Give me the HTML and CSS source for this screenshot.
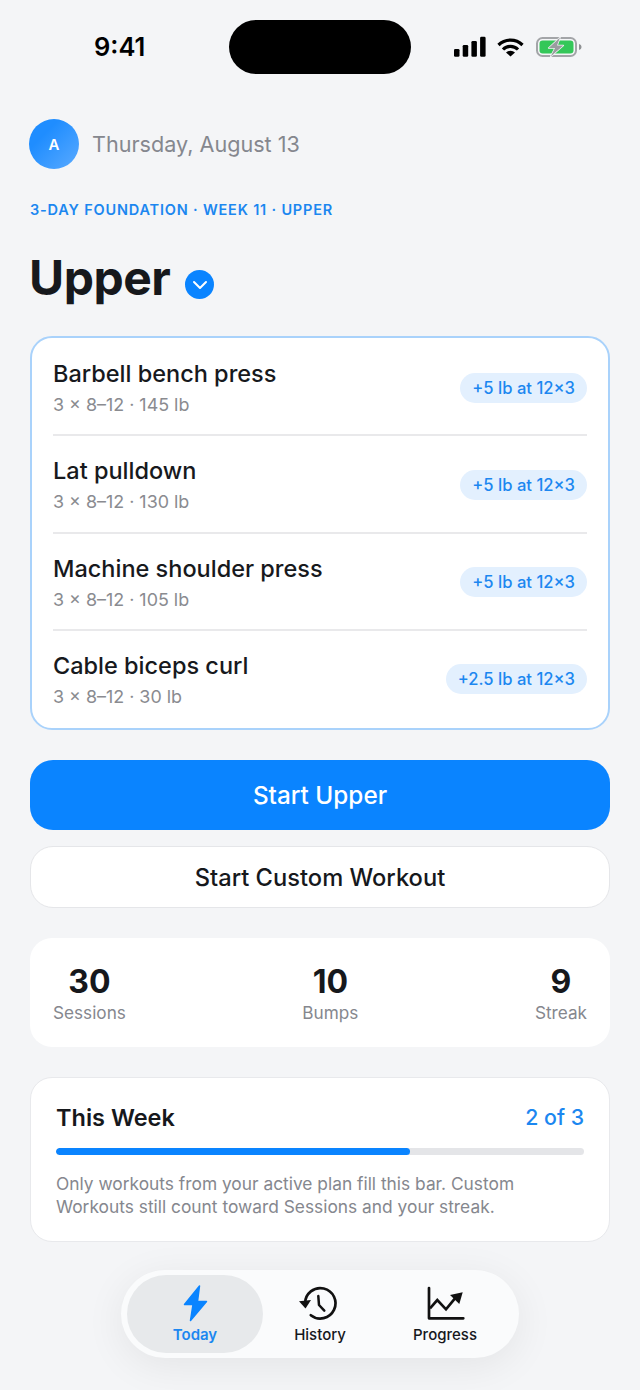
FILE: index.html
```html
<!DOCTYPE html>
<html lang="en">
<head>
<meta charset="utf-8">
<title>Today</title>
<link rel="stylesheet" href="styles.css">
</head>
<body>
<div class="screen">
  <header class="status">
    <span class="time">9:41</span>
    <div class="island"></div>
    <div class="status-icons">
      <svg width="32" height="22" viewBox="0 0 32 22"><rect x="0" y="14" width="5.500" height="7.700" rx="1.300" fill="#000"/><rect x="8.700" y="10" width="5.500" height="11.700" rx="1.300" fill="#000"/><rect x="17.400" y="6" width="5.500" height="15.700" rx="1.300" fill="#000"/><rect x="26.100" y="1.700" width="5.500" height="20" rx="1.300" fill="#000"/></svg>
      <svg width="28" height="22" viewBox="0 0 28 22"><path d="M1.500 10A17 17 0 0 1 25.500 10M6 14.500A10.500 10.500 0 0 1 21 14.500" fill="none" stroke="#000" stroke-width="3.200"/><path d="M9 17.500a6.400 6.400 0 0 1 9 0L13.500 21.500z" fill="#000"/></svg>
      <svg width="46" height="22" viewBox="0 0 46 22"><rect x="1" y="3" width="39" height="18" rx="5.500" fill="none" stroke="#a3a5a8" stroke-width="2"/><rect x="3.500" y="5.500" width="34" height="13" rx="3.200" fill="#34c759"/><path d="M43 9v6c1.500-.4 2.500-1.500 2.500-3s-1-2.600-2.500-3z" fill="#8f9194"/><path d="M24 2.500 12.700 13H19L14.700 21.500 27.300 10.500H21z" fill="#9a9c9f" stroke="#f4f5f7" stroke-width="1.500" stroke-linejoin="round" paint-order="stroke"/></svg>
    </div>
  </header>

  <main class="content">
    <div class="date-row">
      <div class="avatar">A</div>
      <span class="date">Thursday, August 13</span>
    </div>
    <p class="eyebrow">3-DAY FOUNDATION · WEEK 11 · UPPER</p>
    <div class="title-row">
      <h1 class="title">Upper</h1>
      <span class="chevron"><svg width="16" height="10" viewBox="0 0 16 10"><path d="M2 2l6 6 6-6" fill="none" stroke="#fff" stroke-width="2" stroke-linecap="round" stroke-linejoin="round"/></svg></span>
    </div>

    <section class="card exercises">
      <div class="exercise">
        <div class="ex-text"><div class="ex-name">Barbell bench press</div><div class="ex-meta">3 × 8–12 · 145 lb</div></div>
        <span class="bump">+5 lb at 12×3</span>
      </div>
      <div class="exercise">
        <div class="ex-text"><div class="ex-name">Lat pulldown</div><div class="ex-meta">3 × 8–12 · 130 lb</div></div>
        <span class="bump">+5 lb at 12×3</span>
      </div>
      <div class="exercise">
        <div class="ex-text"><div class="ex-name">Machine shoulder press</div><div class="ex-meta">3 × 8–12 · 105 lb</div></div>
        <span class="bump">+5 lb at 12×3</span>
      </div>
      <div class="exercise">
        <div class="ex-text"><div class="ex-name">Cable biceps curl</div><div class="ex-meta">3 × 8–12 · 30 lb</div></div>
        <span class="bump">+2.5 lb at 12×3</span>
      </div>
    </section>

    <button class="btn-primary">Start Upper</button>
    <button class="btn-secondary">Start Custom Workout</button>

    <section class="stats">
      <div class="stat"><div class="stat-num">30</div><div class="stat-label">Sessions</div></div>
      <div class="stat"><div class="stat-num">10</div><div class="stat-label">Bumps</div></div>
      <div class="stat"><div class="stat-num">9</div><div class="stat-label">Streak</div></div>
    </section>

    <section class="card week">
      <div class="week-head"><span class="week-title">This Week</span><span class="week-count">2 of 3</span></div>
      <div class="bar"><div class="bar-fill" style="width:67%"></div></div>
      <p class="week-note">Only workouts from your active plan fill this bar. Custom Workouts still count toward Sessions and your streak.</p>
    </section>
  </main>

  <nav class="tabbar">
    <div class="tab active">
      <svg class="tab-icon" width="40" height="40" viewBox="0 0 40 40"><path d="M24.500 4 9.500 22.500H18L15.500 38.500 31.500 19.500H22.500z" fill="#0a84ff" stroke="#0a84ff" stroke-width="1.500" stroke-linejoin="round"/></svg>
      <span>Today</span>
    </div>
    <div class="tab">
      <svg class="tab-icon" width="40" height="40" viewBox="0 0 40 40"><path d="M5.100 21.300A15.200 15.200 0 1 1 10.800 33.200" fill="none" stroke="#111" stroke-width="2.700" stroke-linecap="round"/><path d="M-1 19.300 11 18 5.500 26.500z" fill="#111"/><path d="M18.300 14 19 23 24.300 28.700" fill="none" stroke="#111" stroke-width="2.500" stroke-linecap="round" stroke-linejoin="round"/></svg>
      <span>History</span>
    </div>
    <div class="tab">
      <svg class="tab-icon" width="40" height="40" viewBox="0 0 40 40"><path d="M4 6V36.300H38.300" fill="none" stroke="#111" stroke-width="2.700" stroke-linecap="round" stroke-linejoin="round"/><path d="M5 26.300 12.300 18 21 27.300 30 16.300" fill="none" stroke="#111" stroke-width="2.700"/><path d="M25 13 37.700 10.300 34.300 22z" fill="#111"/></svg>
      <span>Progress</span>
    </div>
  </nav>
</div>
</body>
</html>
```

FILE: styles.css
```css
* { box-sizing: border-box; margin: 0; padding: 0; }
html, body { width: 640px; height: 1390px; overflow: hidden; }
body { background: #f4f5f7; font-family: Inter, "Liberation Sans", sans-serif; color: #16181c; }
.screen { width: 640px; height: 1390px; display: flex; flex-direction: column; }

.status { height: 119px; padding: 20px 0 0; position: relative; flex: none; }
.time { position: absolute; left: 94px; top: 30px; font-size: 25.500px; line-height: 34px; font-weight: 600; color: #000; }
.island { position: absolute; left: 229px; top: 20px; width: 182px; height: 54px; border-radius: 27px; background: #000; }
.status-icons { position: absolute; left: 454px; top: 35px; display: flex; align-items: center; gap: 11px; height: 22px; }

.content { padding: 0 30px; display: flex; flex-direction: column; flex: none; }
.date-row { display: flex; align-items: center; gap: 13px; height: 50px; margin-left: -1px; }
.avatar { width: 50px; height: 50px; border-radius: 50%; background: linear-gradient(135deg, #1f8dff 30%, #5aaaff); color: #fff; font-size: 15px; font-weight: 600; display: flex; align-items: center; justify-content: center; }
.date { font-size: 21.600px; color: #85878e; }
.eyebrow { margin-top: 32px; font-size: 14.500px; line-height: 17px; font-weight: 600; letter-spacing: .81px; color: #1c87f0; }
.title-row { margin-top: 32px; display: flex; align-items: center; height: 56px; }
.title { font-size: 48px; line-height: 56px; font-weight: 700; letter-spacing: -.5px; margin-left: -1px; color: #16181c; }
.chevron { margin-left: 15px; margin-top: 13px; width: 29px; height: 29px; border-radius: 50%; background: #0a84ff; display: flex; align-items: center; justify-content: center; }

.card { background: #fff; border-radius: 22px; }
.exercises { margin-top: 30px; height: 394px; border: 2px solid #a9d2fb; padding: 1px 21px 0; display: flex; flex-direction: column; }
.exercise { flex: 1; display: flex; align-items: center; justify-content: space-between; padding-top: 2px; border-bottom: 2px solid #e9e9eb; }
.exercise:last-child { border-bottom-color: transparent; }
.ex-name { font-size: 23.500px; line-height: 30px; font-weight: 500; color: #17191d; }
.ex-meta { margin-top: 5px; font-size: 17.900px; line-height: 22px; color: #8a8b90; }
.bump { background: #e3f0fe; color: #1c87f0; border-radius: 15px; height: 30px; padding: 0 12px; font-size: 16.600px; line-height: 30px; font-weight: 500; white-space: nowrap; }

.btn-primary { margin-top: 30px; height: 70px; border: 0; border-radius: 23px; background: #0a84ff; color: #fff; font: 500 24.300px Inter, "Liberation Sans", sans-serif; }
.btn-secondary { margin-top: 16px; height: 62px; border: 1.500px solid #e5e6e9; border-radius: 23px; background: #fff; color: #16181c; font: 500 23.700px Inter, "Liberation Sans", sans-serif; }

.stats { margin-top: 30px; height: 109px; background: #fff; border-radius: 22px; padding: 0 23px; display: flex; justify-content: space-between; align-items: center; }
.stat { text-align: center; }
.stat-num { font-size: 32px; line-height: 40px; font-weight: 700; color: #16181c; }
.stat-label { font-size: 17.200px; line-height: 22px; color: #85878e; }

.week { margin-top: 30px; height: 165px; border: 1.500px solid #e8e9ec; padding: 0 25px; }
.week-head { display: flex; justify-content: space-between; align-items: center; margin-top: 23px; height: 32px; }
.week-title { font-size: 23.500px; font-weight: 600; color: #16181c; }
.week-count { font-size: 21.300px; font-weight: 500; color: #1c87f0; }
.bar { margin-top: 15px; height: 7px; border-radius: 4px; background: #e4e5e8; overflow: hidden; }
.bar-fill { height: 100%; border-radius: 4px; background: #0a84ff; }
.week-note { margin-top: 17px; font-size: 17.350px; line-height: 23px; color: #85878e; }

.tabbar { margin: 28px auto 0; width: 398px; height: 88px; padding: 5px 6px; border-radius: 44px; background: #fafbfc; box-shadow: 0 8px 40px rgba(0,0,0,.07); display: grid; grid-template-columns: 136px 114px 136px; flex: none; }
.tab { border-radius: 39px; display: flex; flex-direction: column; align-items: center; justify-content: flex-end; padding-bottom: 8px; gap: 3px; font-size: 15px; line-height: 20px; font-weight: 500; color: #16181c; }
.tab-icon { overflow: visible; }
.tab.active { background: #e7e9eb; color: #1c87f0; font-weight: 600; }
```
